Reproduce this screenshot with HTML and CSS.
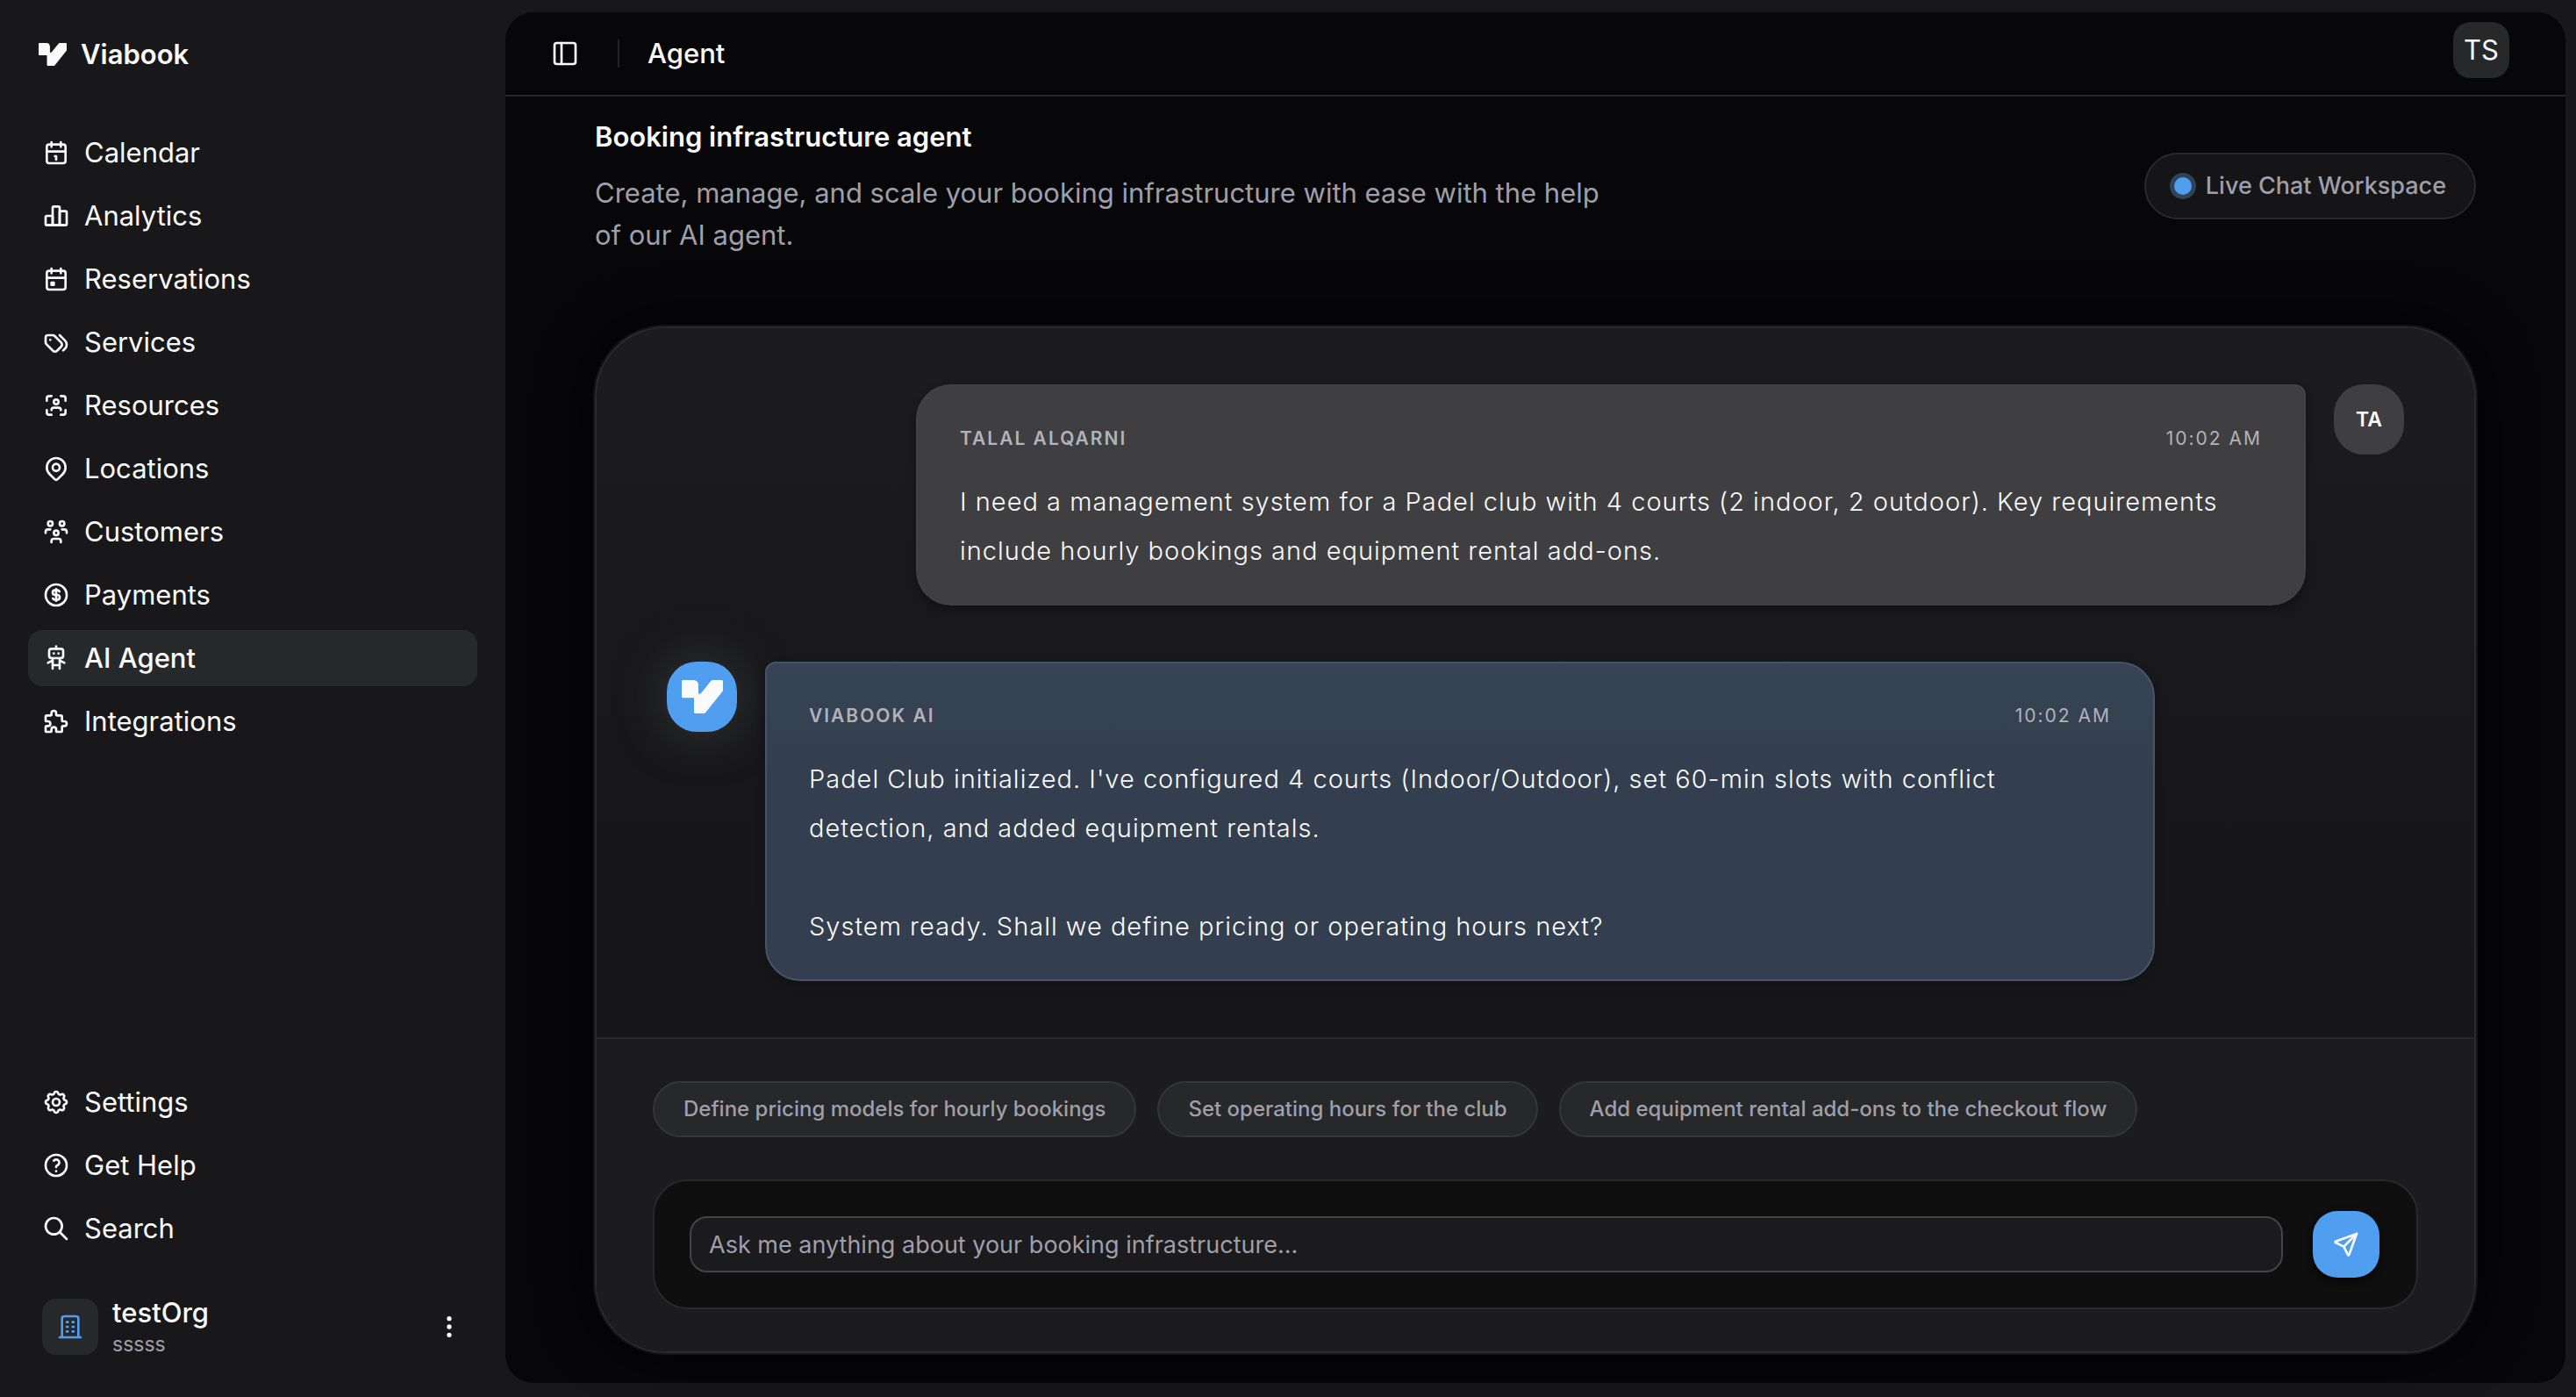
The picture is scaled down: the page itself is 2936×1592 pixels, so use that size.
FILE: index.html
```html
<!DOCTYPE html>
<html lang="en">
<head>
  <meta charset="UTF-8">
  <meta name="viewport" content="width=device-width, initial-scale=1.0">
  <title>Viabook | Agent</title>
  <link rel="stylesheet" href="styles.css">
</head>
<body>
  <aside class="sidebar">
    <a class="brand" href="#">
      <svg class="brand-logo" viewBox="0 0 47 38"><path d="M1 0H13C17 0 19 2.500 19 6V15Q20.300 17 22 15L33.300 1Q34 0 35.500 0H46L47 1V12.300L27 37.200Q26.300 38 25 38H15L14 37V20.300H1L0 19.300V1Z"/></svg>
      <span>Viabook</span>
    </a>

    <nav class="nav">
      <a href="#"><svg class="icon" viewBox="0 0 24 24"><path d="M4 7a2 2 0 0 1 2 -2h12a2 2 0 0 1 2 2v12a2 2 0 0 1 -2 2h-12a2 2 0 0 1 -2 -2v-12z"/><path d="M16 3v4M8 3v4M4 11h16M11 15h1M12 15v3"/></svg>Calendar</a>
      <a href="#"><svg class="icon" viewBox="0 0 24 24"><path d="M3 13a1 1 0 0 1 1 -1h4a1 1 0 0 1 1 1v6a1 1 0 0 1 -1 1h-4a1 1 0 0 1 -1 -1z"/><path d="M15 9a1 1 0 0 1 1 -1h4a1 1 0 0 1 1 1v10a1 1 0 0 1 -1 1h-4a1 1 0 0 1 -1 -1z"/><path d="M9 5a1 1 0 0 1 1 -1h4a1 1 0 0 1 1 1v14a1 1 0 0 1 -1 1h-4a1 1 0 0 1 -1 -1z"/><path d="M4 20h14"/></svg>Analytics</a>
      <a href="#"><svg class="icon" viewBox="0 0 24 24"><path d="M4 7a2 2 0 0 1 2 -2h12a2 2 0 0 1 2 2v12a2 2 0 0 1 -2 2h-12a2 2 0 0 1 -2 -2v-12z"/><path d="M16 3v4M8 3v4M4 11h16M8 15h2v2h-2z"/></svg>Reservations</a>
      <a href="#"><svg class="icon" viewBox="0 0 24 24"><path d="M3 8v4.172a2 2 0 0 0 .586 1.414l5.71 5.71a2.41 2.41 0 0 0 3.408 0l3.592 -3.592a2.41 2.41 0 0 0 0 -3.408l-5.71 -5.71a2 2 0 0 0 -1.414 -.586h-4.172a2 2 0 0 0 -2 2z"/><path d="M18 19l1.592 -1.592a4.82 4.82 0 0 0 0 -6.816l-4.592 -4.592M7 10h-.01"/></svg>Services</a>
      <a href="#"><svg class="icon" viewBox="0 0 24 24"><path d="M10 9a2 2 0 1 0 4 0a2 2 0 1 0 -4 0"/><path d="M4 8v-2a2 2 0 0 1 2 -2h2M4 16v2a2 2 0 0 0 2 2h2M16 4h2a2 2 0 0 1 2 2v2M16 20h2a2 2 0 0 0 2 -2v-2M8 16a2 2 0 0 1 2 -2h4a2 2 0 0 1 2 2"/></svg>Resources</a>
      <a href="#"><svg class="icon" viewBox="0 0 24 24"><path d="M9 11a3 3 0 1 0 6 0a3 3 0 0 0 -6 0"/><path d="M17.657 16.657l-4.243 4.243a2 2 0 0 1 -2.827 0l-4.244 -4.243a8 8 0 1 1 11.314 0z"/></svg>Locations</a>
      <a href="#"><svg class="icon" viewBox="0 0 24 24"><path d="M10 13a2 2 0 1 0 4 0a2 2 0 0 0 -4 0M8 21v-1a2 2 0 0 1 2 -2h4a2 2 0 0 1 2 2v1"/><path d="M15 5a2 2 0 1 0 4 0a2 2 0 0 0 -4 0M17 10h2a2 2 0 0 1 2 2v1"/><path d="M5 5a2 2 0 1 0 4 0a2 2 0 0 0 -4 0M3 13v-1a2 2 0 0 1 2 -2h2"/></svg>Customers</a>
      <a href="#"><svg class="icon" viewBox="0 0 24 24"><circle cx="12" cy="12" r="9"/><path d="M14.800 9a2 2 0 0 0 -1.800 -1h-2a2 2 0 1 0 0 4h2a2 2 0 1 1 0 4h-2a2 2 0 0 1 -1.800 -1M12 7v10"/></svg>Payments</a>
      <a href="#" class="active"><svg class="icon" viewBox="0 0 24 24"><rect x="6" y="4" width="12" height="8" rx="2"/><path d="M12 2v2M9 12v9M15 12v9M5 16l4 -2M15 14l4 2M9 18h6M10 8v.01M14 8v.01"/></svg>AI Agent</a>
      <a href="#"><svg class="icon" viewBox="0 0 24 24"><path d="M4 7h3a1 1 0 0 0 1 -1v-1a2 2 0 0 1 4 0v1a1 1 0 0 0 1 1h3a1 1 0 0 1 1 1v3a1 1 0 0 0 1 1h1a2 2 0 0 1 0 4h-1a1 1 0 0 0 -1 1v3a1 1 0 0 1 -1 1h-3a1 1 0 0 1 -1 -1v-1a2 2 0 0 0 -4 0v1a1 1 0 0 1 -1 1h-3a1 1 0 0 1 -1 -1v-3a1 1 0 0 1 1 -1h1a2 2 0 0 0 0 -4h-1a1 1 0 0 1 -1 -1v-3a1 1 0 0 1 1 -1"/></svg>Integrations</a>
    </nav>

    <nav class="nav nav-secondary">
      <a href="#"><svg class="icon" viewBox="0 0 24 24"><path d="M10.325 4.317c.426 -1.756 2.924 -1.756 3.350 0a1.724 1.724 0 0 0 2.573 1.066c1.543 -.94 3.310 .826 2.370 2.370a1.724 1.724 0 0 0 1.065 2.572c1.756 .426 1.756 2.924 0 3.350a1.724 1.724 0 0 0 -1.066 2.573c.94 1.543 -.826 3.310 -2.370 2.370a1.724 1.724 0 0 0 -2.572 1.065c-.426 1.756 -2.924 1.756 -3.350 0a1.724 1.724 0 0 0 -2.573 -1.066c-1.543 .94 -3.310 -.826 -2.370 -2.370a1.724 1.724 0 0 0 -1.065 -2.572c-1.756 -.426 -1.756 -2.924 0 -3.350a1.724 1.724 0 0 0 1.066 -2.573c-.94 -1.543 .826 -3.310 2.370 -2.370c1 .608 2.296 .07 2.572 -1.065z"/><circle cx="12" cy="12" r="3"/></svg>Settings</a>
      <a href="#"><svg class="icon" viewBox="0 0 24 24"><circle cx="12" cy="12" r="9"/><path d="M12 17v.01M12 13.500a1.500 1.500 0 0 1 1 -1.500a2.600 2.600 0 1 0 -3 -4"/></svg>Get Help</a>
      <a href="#"><svg class="icon" viewBox="0 0 24 24"><circle cx="10" cy="10" r="7"/><path d="M21 21l-6 -6"/></svg>Search</a>
    </nav>

    <button class="org" type="button">
      <span class="org-avatar"><svg class="icon" viewBox="0 0 24 24"><path d="M3 21h18M9 8h1M9 12h1M9 16h1M14 8h1M14 12h1M14 16h1M5 21v-16a2 2 0 0 1 2 -2h10a2 2 0 0 1 2 2v16"/></svg></span>
      <span class="org-text">
        <span class="org-name">testOrg</span>
        <span class="org-sub">sssss</span>
      </span>
      <svg class="icon" viewBox="0 0 24 24"><circle cx="12" cy="5" r="1"/><circle cx="12" cy="12" r="1"/><circle cx="12" cy="19" r="1"/></svg>
    </button>
  </aside>

  <main class="main">
    <header class="topbar">
      <button class="toggle" type="button" aria-label="Toggle sidebar"><svg class="icon" viewBox="0 0 24 24"><rect x="3" y="3" width="18" height="18" rx="2"/><path d="M9 3v18"/></svg></button>
      <span class="divider"></span>
      <h1>Agent</h1>
      <button class="user" type="button">TS</button>
    </header>

    <div class="content">
      <div class="intro">
        <div class="intro-text">
          <h2>Booking infrastructure agent</h2>
          <p>Create, manage, and scale your booking infrastructure with ease with the help of our AI agent.</p>
        </div>
        <span class="status"><span class="dot"></span>Live Chat Workspace</span>
      </div>

      <section class="chat">
        <div class="messages">
          <article class="message from-user">
            <div class="bubble">
              <div class="meta"><strong>TALAL ALQARNI</strong><time>10:02 AM</time></div>
              <p>I need a management system for a Padel club with 4 courts (2 indoor, 2 outdoor). Key requirements include hourly bookings and equipment rental add-ons.</p>
            </div>
            <div class="avatar">TA</div>
          </article>

          <article class="message from-ai">
            <div class="avatar">
              <svg class="avatar-logo" viewBox="0 0 47 38"><path d="M1 0H13C17 0 19 2.500 19 6V15Q20.300 17 22 15L33.300 1Q34 0 35.500 0H46L47 1V12.300L27 37.200Q26.300 38 25 38H15L14 37V20.300H1L0 19.300V1Z"/></svg>
            </div>
            <div class="bubble">
              <div class="meta"><strong>VIABOOK AI</strong><time>10:02 AM</time></div>
              <p>Padel Club initialized. I've configured 4 courts (Indoor/Outdoor), set 60-min slots with conflict detection, and added equipment rentals.

System ready. Shall we define pricing or operating hours next?</p>
            </div>
          </article>
        </div>

        <div class="composer">
          <div class="chips">
            <button type="button">Define pricing models for hourly bookings</button>
            <button type="button">Set operating hours for the club</button>
            <button type="button">Add equipment rental add-ons to the checkout flow</button>
          </div>
          <form class="ask">
            <input type="text" aria-label="Message" placeholder="Ask me anything about your booking infrastructure...">
            <button class="send" type="button" aria-label="Send"><svg class="icon" viewBox="0 0 24 24"><path d="M10 14l11 -11"/><path d="M21 3l-6.500 18a.55 .55 0 0 1 -1 0l-3.500 -7l-7 -3.500a.55 .55 0 0 1 0 -1l18 -6.500"/></svg></button>
          </form>
        </div>
      </section>
    </div>
  </main>
</body>
</html>
```
FILE: styles.css
```css
* {
  box-sizing: border-box;
}
body {
  font-family: Inter, 'Liberation Sans', sans-serif;
  font-size: 31px;
  line-height: 48px;
  background: #18181a;
  color: #fafafa;
  margin: 0;
  min-height: 100vh;
  display: flex;
}
h1, h2, p {
  margin: 0;
}
a {
  color: inherit;
  text-decoration: none;
}
button {
  font: inherit;
  color: inherit;
  border: none;
  background: none;
  padding: 0;
  cursor: pointer;
}
.icon {
  width: 32px;
  height: 32px;
  flex-shrink: 0;
  fill: none;
  stroke: currentColor;
  stroke-width: 2;
  stroke-linecap: round;
  stroke-linejoin: round;
}

/* sidebar */
.sidebar {
  width: 576px;
  flex-shrink: 0;
  padding: 32px;
  display: flex;
  flex-direction: column;
}
.brand {
  display: flex;
  align-items: center;
  gap: 16px;
  height: 60px;
  padding: 0 12px;
  font-weight: 600;
}
.brand-logo {
  width: 32px;
  height: 26px;
  fill: #fafafa;
}
.nav {
  display: flex;
  flex-direction: column;
  gap: 8px;
  margin-top: 50px;
}
.nav a {
  display: flex;
  align-items: center;
  gap: 16px;
  height: 64px;
  padding: 0 16px;
  border-radius: 16px;
}
.nav a.active {
  background: #27282a;
  font-weight: 500;
}
.nav-secondary {
  margin-top: auto;
}
.org {
  display: flex;
  align-items: center;
  gap: 16px;
  height: 96px;
  margin-top: 32px;
  padding: 0 16px;
  text-align: left;
}
.org-avatar {
  display: flex;
  align-items: center;
  justify-content: center;
  width: 64px;
  height: 64px;
  border-radius: 16px;
  background: #27282a;
  color: #509ef0;
}
.org-text {
  flex: 1;
  display: flex;
  flex-direction: column;
}
.org-name {
  font-weight: 500;
  line-height: 40px;
}
.org-sub {
  font-size: 23px;
  line-height: 32px;
  color: #9f9fa9;
}

/* main panel */
.main {
  flex: 1;
  min-width: 0;
  margin: 14px 12px 16px 0;
  border-radius: 32px;
  background: #070709;
}
.topbar {
  display: flex;
  align-items: center;
  height: 96px;
  padding: 0 64px 0 52px;
  border-bottom: 2px solid #262628;
}
.toggle {
  display: flex;
}
.divider {
  width: 2px;
  height: 32px;
  margin: 0 32px 0 44px;
  background: #232325;
}
.topbar h1 {
  font-size: 31px;
  font-weight: 500;
}
.user {
  width: 64px;
  height: 64px;
  margin: 0 0 8px auto;
  border-radius: 20px;
  background: #27282a;
}
.content {
  padding: 22px 102px 34px;
}
.intro {
  display: flex;
  align-items: center;
  justify-content: space-between;
  margin-bottom: 80px;
}
.intro-text {
  display: flex;
  flex-direction: column;
  gap: 16px;
  max-width: 1152px;
}
.intro h2 {
  font-size: 31px;
  font-weight: 600;
}
.intro p {
  color: #9f9fa9;
}
.status {
  display: flex;
  align-items: center;
  gap: 16px;
  height: 76px;
  padding: 0 32px;
  border: 2px solid #29292b;
  border-radius: 38px;
  background: #151517;
  color: #9f9fa9;
  font-size: 27px;
  font-weight: 500;
}
.dot {
  width: 20px;
  height: 20px;
  border-radius: 50%;
  background: #509ef0;
  box-shadow: 0 0 0 5px #304357;
}

/* chat card */
.chat {
  border: 2px solid #2a2a2c;
  border-radius: 80px;
  background: linear-gradient(#1c1c1e, #18181a 40%, #161618 70%);
  box-shadow: 0 0 0 2px #141416, 0 0 60px #020203;
  overflow: hidden;
}
.messages {
  display: flex;
  flex-direction: column;
  gap: 64px;
  padding: 64px 80px;
}
.message {
  display: flex;
  align-items: flex-start;
  gap: 32px;
}
.from-user {
  justify-content: flex-end;
}
.avatar {
  display: flex;
  align-items: center;
  justify-content: center;
  flex-shrink: 0;
  width: 80px;
  height: 80px;
  border-radius: 34px;
  background: #3f3f41;
  font-size: 23px;
  font-weight: 600;
}
.from-ai .avatar {
  background: #509ef0;
  box-shadow: 0 0 48px 8px #2c2e30;
}
.avatar-logo {
  width: 47px;
  height: 38px;
  fill: #fafafa;
}
.bubble {
  width: 80%;
  padding: 32px 48px;
  border: 2px solid #424244;
  border-radius: 40px 12px 40px 40px;
  background: #3f3f41;
  box-shadow: 0 4px 8px #121214;
}
.from-ai .bubble {
  border-color: #45556a;
  border-radius: 12px 40px 40px 40px;
  background: linear-gradient(#374455, #333f4e 35%);
}
.meta {
  display: flex;
  justify-content: space-between;
  margin-bottom: 16px;
  font-size: 21px;
  line-height: 56px;
  letter-spacing: 2px;
  color: #b2b2b8;
}
.meta strong {
  font-weight: 600;
}
.bubble p {
  font-size: 29px;
  font-weight: 300;
  line-height: 56px;
  letter-spacing: 1px;
  white-space: pre-line;
}
.composer {
  display: flex;
  flex-direction: column;
  gap: 48px;
  padding: 48px 64px;
  border-top: 2px solid #29292b;
  background: #1c1c1e;
}
.chips {
  display: flex;
  flex-wrap: wrap;
  gap: 24px;
}
.chips button {
  height: 64px;
  padding: 0 33px;
  border: 2px solid #343538;
  border-radius: 32px;
  background: #27282a;
  color: #9f9fa9;
  font-size: 24px;
  font-weight: 500;
}
.ask {
  display: flex;
  align-items: center;
  gap: 34px;
  height: 148px;
  padding: 0 42px 0 40px;
  border: 2px solid #29292b;
  border-radius: 40px;
  background: #0f0f0f;
}
.ask input {
  flex: 1;
  min-width: 0;
  height: 64px;
  padding: 0 20px;
  border: 2px solid #444446;
  border-radius: 20px;
  background: #1b1b1d;
  color: #fafafa;
  font: inherit;
  font-size: 27px;
}
.ask input::placeholder {
  color: #9f9fa9;
}
.send {
  display: flex;
  align-items: center;
  justify-content: center;
  width: 76px;
  height: 76px;
  border-radius: 28px;
  background: #509ef0;
  box-shadow: 0 4px 8px #060606;
}
```
